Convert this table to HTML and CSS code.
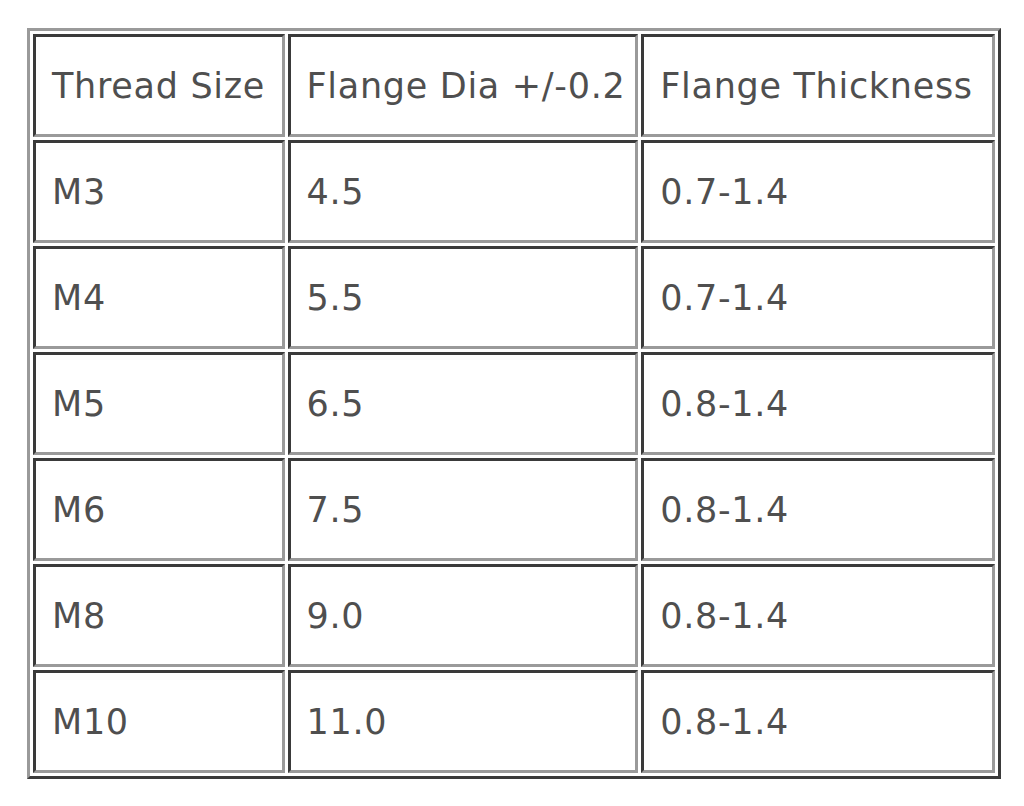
FILE: index.html
```html
<!DOCTYPE html>
<html>
<head>
<meta charset="utf-8">
<link rel="stylesheet" href="styles.css">
</head>
<body>
<table class="spec">
  <tr><td>Thread Size</td><td>Flange Dia +/-0.2</td><td>Flange Thickness</td></tr>
  <tr><td>M3</td><td>4.5</td><td>0.7-1.4</td></tr>
  <tr><td>M4</td><td>5.5</td><td>0.7-1.4</td></tr>
  <tr><td>M5</td><td>6.5</td><td>0.8-1.4</td></tr>
  <tr><td>M6</td><td>7.5</td><td>0.8-1.4</td></tr>
  <tr><td>M8</td><td>9.0</td><td>0.8-1.4</td></tr>
  <tr><td>M10</td><td>11.0</td><td>0.8-1.4</td></tr>
</table>
</body>
</html>
```
FILE: styles.css
```css
html, body {
  margin: 0;
  padding: 0;
  background: #ffffff;
}
body {
  padding: 28px 0 0 27px;
}
.spec {
  border-collapse: separate;
  border-spacing: 3px;
  border-style: solid;
  border-width: 3px;
  border-color: #9a9a9a #3a3a3a #3a3a3a #9a9a9a;
  font-family: "DejaVu Sans", "Liberation Sans", sans-serif;
  font-size: 35px;
  letter-spacing: 0.7px;
  color: #4f4f4f;
  width: 974px;
  box-sizing: border-box;
}
.spec td {
  border-style: solid;
  border-width: 3px;
  border-color: #3a3a3a #9a9a9a #9a9a9a #3a3a3a;
  padding: 0 0 0 16px;
  vertical-align: middle;
  box-sizing: border-box;
  height: 103px;
  white-space: nowrap;
}
.spec td:nth-child(1) { width: 251px; }
.spec td:nth-child(2) { width: 350px; }
.spec td:nth-child(3) { width: 353px; }
```
